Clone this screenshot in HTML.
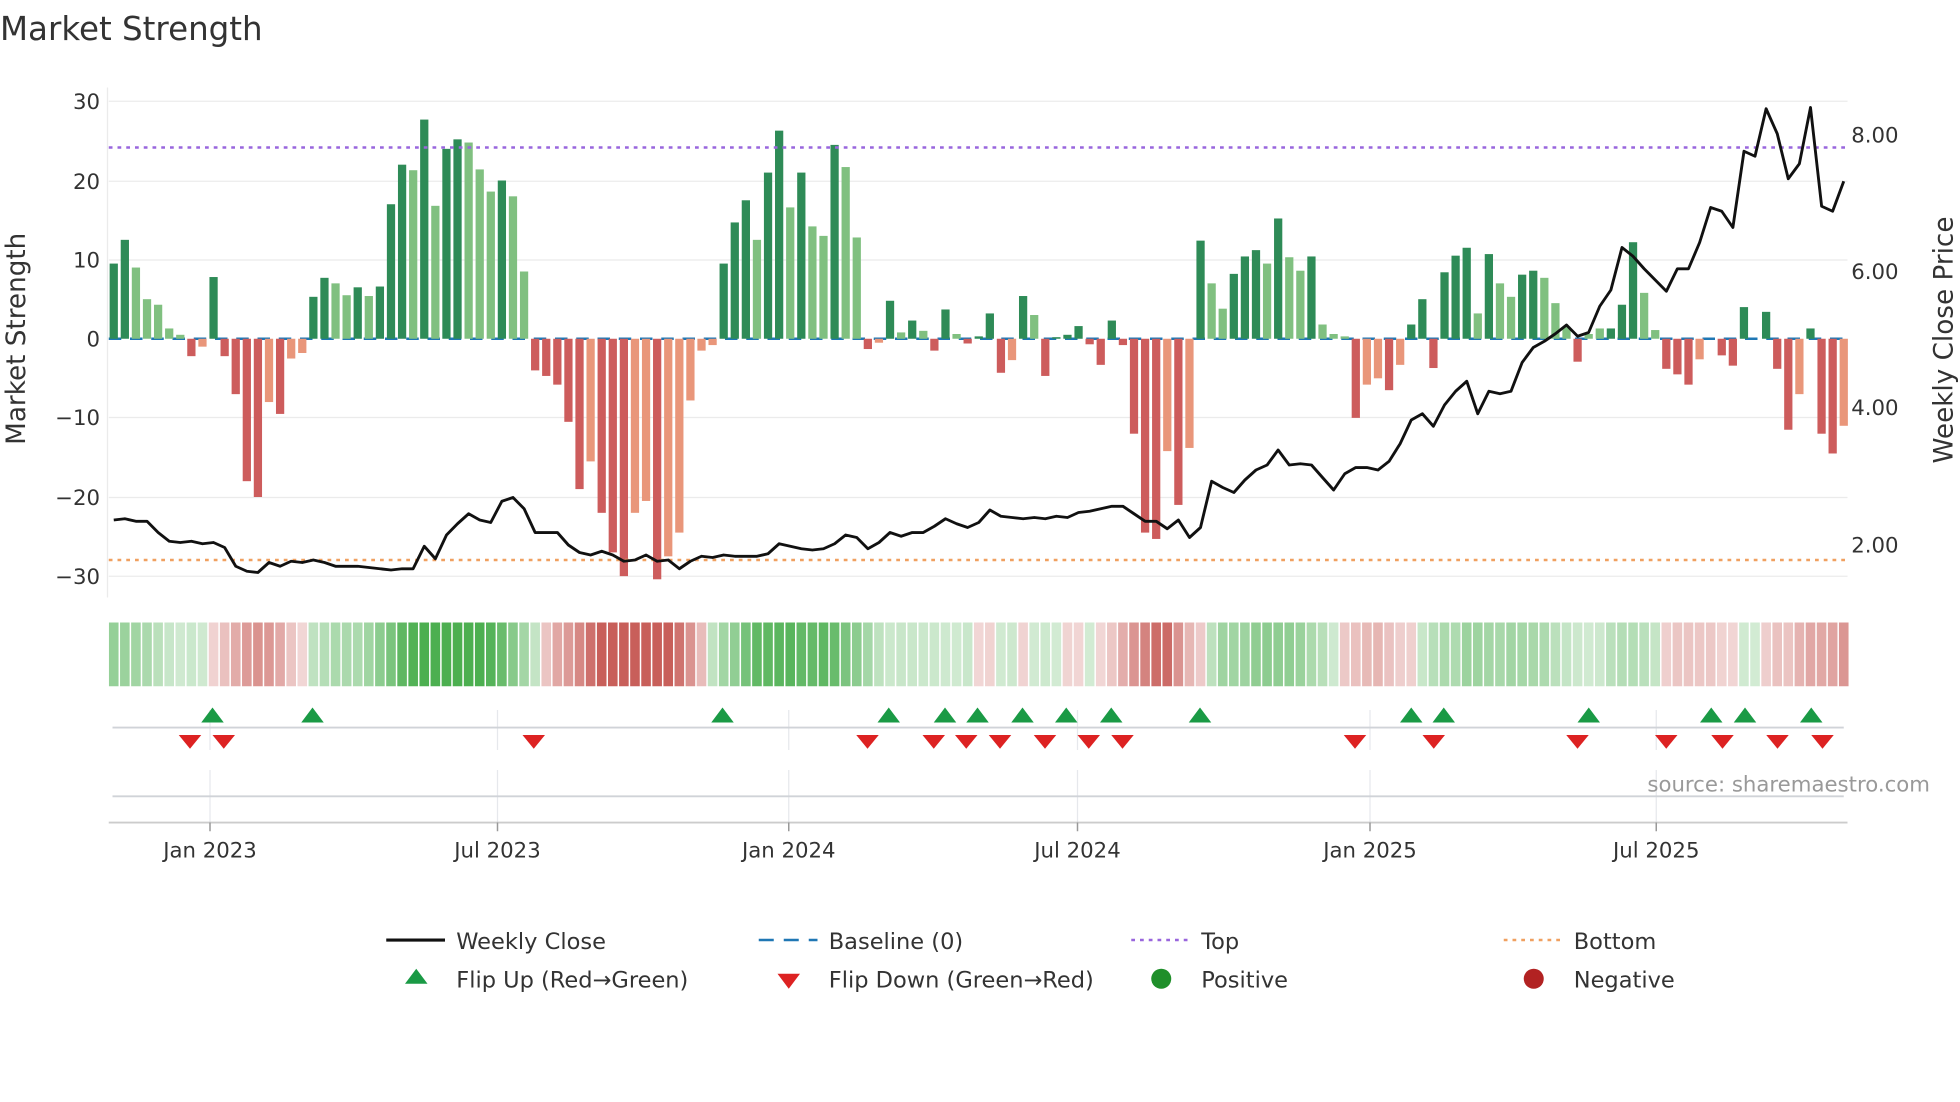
<!DOCTYPE html>
<html><head><meta charset="utf-8"><style>
html,body{margin:0;padding:0;background:#fff;}
svg{display:block;font-family:"DejaVu Sans","Liberation Sans",sans-serif;}
</style></head><body>
<svg id="s" width="1960" height="1102" viewBox="0 0 1568 881.6" xmlns="http://www.w3.org/2000/svg">
<rect width="1568" height="882" fill="#fff"/>
<text x="0" y="32" font-size="26" fill="#333">Market Strength</text>
<g stroke="#ebebeb" stroke-width="1">
<line x1="87" x2="1478" y1="81" y2="81"/><line x1="87" x2="1478" y1="145" y2="145"/>
<line x1="87" x2="1478" y1="208" y2="208"/><line x1="87" x2="1478" y1="334" y2="334"/>
<line x1="87" x2="1478" y1="398" y2="398"/><line x1="87" x2="1478" y1="461" y2="461"/>
<line x1="86" x2="86" y1="70" y2="478"/>
</g>
<g font-size="17" fill="#333" text-anchor="end">
<text x="80" y="87">30</text><text x="80" y="151">20</text><text x="80" y="214">10</text>
<text x="80" y="277">0</text><text x="80" y="340">−10</text><text x="80" y="404">−20</text><text x="80" y="467">−30</text>
</g>
<g font-size="17" fill="#333">
<text x="1481" y="114">8.00</text><text x="1481" y="223">6.00</text><text x="1481" y="332">4.00</text><text x="1481" y="442">2.00</text>
</g>
<text transform="translate(20,271) rotate(-90)" font-size="21" fill="#333" text-anchor="middle">Market Strength</text>
<text transform="translate(1562,272) rotate(-90)" font-size="21" fill="#333" text-anchor="middle">Weekly Close Price</text>
<line x1="87" x2="1478" y1="271" y2="271" stroke="#1f77b4" stroke-width="2" stroke-dasharray="10 7"/>
<g id="bars"></g>
<line x1="87" x2="1478" y1="118" y2="118" stroke="#9966dd" stroke-width="2" stroke-dasharray="3 4"/>
<line x1="87" x2="1478" y1="448" y2="448" stroke="#f0a060" stroke-width="2" stroke-dasharray="3 4"/>
<polyline id="price" fill="none" stroke="#111" stroke-width="2.3" stroke-linejoin="round"/>
<g id="heat"></g>
<g stroke="#e6e8ec" stroke-width="1">
<line x1="168" x2="168" y1="568" y2="600"/><line x1="398" x2="398" y1="568" y2="600"/><line x1="631" x2="631" y1="568" y2="600"/>
<line x1="862" x2="862" y1="568" y2="600"/><line x1="1096" x2="1096" y1="568" y2="600"/><line x1="1325" x2="1325" y1="568" y2="600"/>
<line x1="168" x2="168" y1="616" y2="658"/><line x1="398" x2="398" y1="616" y2="658"/><line x1="631" x2="631" y1="616" y2="658"/>
<line x1="862" x2="862" y1="616" y2="658"/><line x1="1096" x2="1096" y1="616" y2="658"/><line x1="1325" x2="1325" y1="616" y2="658"/>
</g>
<line x1="90" x2="1475" y1="582" y2="582" stroke="#d0d3d8" stroke-width="1.5"/>
<line x1="90" x2="1475" y1="637" y2="637" stroke="#d0d3d8" stroke-width="1.5"/>
<line x1="87" x2="1478" y1="658" y2="658" stroke="#ccc" stroke-width="1.5"/>
<g stroke="#999" stroke-width="1.2">
<line x1="168" x2="168" y1="658" y2="665"/><line x1="398" x2="398" y1="658" y2="665"/><line x1="631" x2="631" y1="658" y2="665"/>
<line x1="862" x2="862" y1="658" y2="665"/><line x1="1096" x2="1096" y1="658" y2="665"/><line x1="1325" x2="1325" y1="658" y2="665"/>
</g>
<g id="marks"></g>
<text x="1544" y="633" font-size="17" fill="#999" text-anchor="end">source: sharemaestro.com</text>
<g font-size="17" fill="#333" text-anchor="middle">
<text x="168" y="686">Jan 2023</text><text x="398" y="686">Jul 2023</text><text x="631" y="686">Jan 2024</text>
<text x="862" y="686">Jul 2024</text><text x="1096" y="686">Jan 2025</text><text x="1325" y="686">Jul 2025</text>
</g>
<g font-size="18" fill="#333">
<line x1="309" x2="356" y1="752" y2="752" stroke="#111" stroke-width="2.5"/>
<text x="365" y="759">Weekly Close</text>
<line x1="607" x2="654" y1="752" y2="752" stroke="#1f77b4" stroke-width="2" stroke-dasharray="12 8"/>
<text x="663" y="759">Baseline (0)</text>
<line x1="905" x2="952" y1="752" y2="752" stroke="#9966dd" stroke-width="2" stroke-dasharray="3 4"/>
<text x="961" y="759">Top</text>
<line x1="1203" x2="1250" y1="752" y2="752" stroke="#f0a060" stroke-width="2" stroke-dasharray="3 4"/>
<text x="1259" y="759">Bottom</text>
<polygon points="333,775 324,787 342,787" fill="#1a9a45"/>
<text x="365" y="790">Flip Up (Red→Green)</text>
<polygon points="622,779 640,779 631,791" fill="#dd2222"/>
<text x="663" y="790">Flip Down (Green→Red)</text>
<circle cx="929" cy="783" r="8" fill="#1f8f2a"/>
<text x="961" y="790">Positive</text>
<circle cx="1227" cy="783" r="8" fill="#b22222"/>
<text x="1259" y="790">Negative</text>
</g>
</svg>
<script>
var B=[[9.5,1],[12.5,1],[9,0],[5,0],[4.3,0],[1.3,0],[0.5,0],[-2.2,1],[-1,0],[7.8,1],[-2.2,1],[-7,1],[-18,1],[-20,1],[-8,0],[-9.5,1],[-2.5,0],[-1.8,0],[5.3,1],[7.7,1],[7,0],[5.5,0],[6.5,1],[5.4,0],[6.6,1],[17,1],[22,1],[21.3,0],[27.7,1],[16.8,0],[24,1],[25.2,1],[24.8,0],[21.4,0],[18.6,0],[20,1],[18,0],[8.5,0],[-4,1],[-4.7,1],[-5.8,1],[-10.5,1],[-19,1],[-15.5,0],[-22,1],[-27,1],[-30,1],[-22,0],[-20.5,0],[-30.4,1],[-27.5,0],[-24.5,0],[-7.8,0],[-1.5,0],[-0.8,0],[9.5,1],[14.7,1],[17.5,1],[12.5,0],[21,1],[26.3,1],[16.6,0],[21,1],[14.2,0],[13,0],[24.5,1],[21.7,0],[12.8,0],[-1.3,1],[-0.5,0],[4.8,1],[0.8,0],[2.3,1],[1,0],[-1.5,1],[3.7,1],[0.6,0],[-0.6,1],[0.3,1],[3.2,1],[-4.3,1],[-2.7,0],[5.4,1],[3,0],[-4.7,1],[0.2,1],[0.5,1],[1.6,1],[-0.7,1],[-3.3,1],[2.3,1],[-0.8,1],[-12,1],[-24.5,1],[-25.3,1],[-14.2,0],[-21,1],[-13.8,0],[12.4,1],[7,0],[3.8,0],[8.2,1],[10.4,1],[11.2,1],[9.5,0],[15.2,1],[10.3,0],[8.6,0],[10.4,1],[1.8,0],[0.6,0],[0.3,0],[-10,1],[-5.8,0],[-5,0],[-6.5,1],[-3.3,0],[1.8,1],[5,1],[-3.7,1],[8.4,1],[10.5,1],[11.5,1],[3.2,0],[10.7,1],[7,0],[5.3,0],[8.1,1],[8.6,1],[7.7,0],[4.5,0],[1.5,0],[-2.9,1],[0.6,0],[1.3,0],[1.3,1],[4.3,1],[12.2,1],[5.8,0],[1.1,0],[-3.8,1],[-4.5,1],[-5.8,1],[-2.6,0],[0,0],[-2.1,1],[-3.4,1],[4,1],[0,0],[3.4,1],[-3.8,1],[-11.5,1],[-7,0],[1.3,1],[-12,1],[-14.5,1],[-11,0]];
var P=[416,415,417,417,426,433,434,433,435,434,438,453,457,458,450,453,449,450,448,450,453,453,453,454,455,456,455,455,437,447,428,419,411,416,418,401,398,407,426,426,426,436,442,444,441,444,449,448,444,449,448,455,449,445,446,444,445,445,445,443,435,437,439,440,439,435,428,430,439,434,426,429,426,426,421,415,419,422,418,408,413,414,415,414,415,413,414,410,409,407,405,405,411,417,417,423,416,430,422,385,390,394,384,376,372,360,372,371,372,382,392,379,374,374,376,369,355,336,331,341,324,313,305,331,313,315,313,290,278,273,267,260,269,266,245,232,198,205,215,224,233,215,215,194,166,169,182,121,125,87,107,143,131,86,165,169,145];
var NS="http://www.w3.org/2000/svg";
function el(p,t,a){var e=document.createElementNS(NS,t);for(var k in a)e.setAttribute(k,a[k]);p.appendChild(e);return e;}
var n=B.length,x0=91,dx=(1475-91)/(n-1);
var gb=document.getElementById('bars'),gh=document.getElementById('heat');
function mix(c,t){var w=[255,255,255];return 'rgb('+c.map(function(v,i){return Math.round(w[i]+(v-w[i])*t)}).join(',')+')';}
for(var i=0;i<n;i++){var v=B[i][0],d=B[i][1],x=x0+i*dx,h=Math.abs(v)*6.33;
 var col=v>=0?(d?'#2e8b57':'#80c080'):(d?'#cd5c5c':'#e9967a');
 if(Math.abs(v)>0.05)el(gb,'rect',{x:x-3.3,width:6.6,y:v>=0?271-h:271,height:Math.max(h,0.5),fill:col});
 var s=0;for(var j=-2;j<=2;j++){var k=Math.min(n-1,Math.max(0,i+j));s+=B[k][0];}s/=5;
 var t=Math.min(1,0.25+Math.abs(s)/22*0.75);
 el(gh,'rect',{x:x-dx/2+0.6,width:dx-1.2,y:498,height:51,fill:s>=0?mix([76,175,80],t):mix([200,95,90],t)});
}
var pts=P.slice(0,n).map(function(y,i){return (x0+i*dx).toFixed(1)+','+y}).join(' ');
document.getElementById('price').setAttribute('points',pts);
var gm=document.getElementById('marks');
[170,250,578,711,756,782,818,853,889,960,1129,1155,1271,1369,1396,1449].forEach(function(x){el(gm,'polygon',{points:(x)+',566 '+(x-9)+',578 '+(x+9)+',578',fill:'#1a9a45'});});
[152,179,427,694,747,773,800,836,871,898,1084,1147,1262,1333,1378,1422,1458].forEach(function(x){el(gm,'polygon',{points:(x-9)+',588 '+(x+9)+',588 '+x+',599',fill:'#dd2222'});});
</script>
</body></html>
